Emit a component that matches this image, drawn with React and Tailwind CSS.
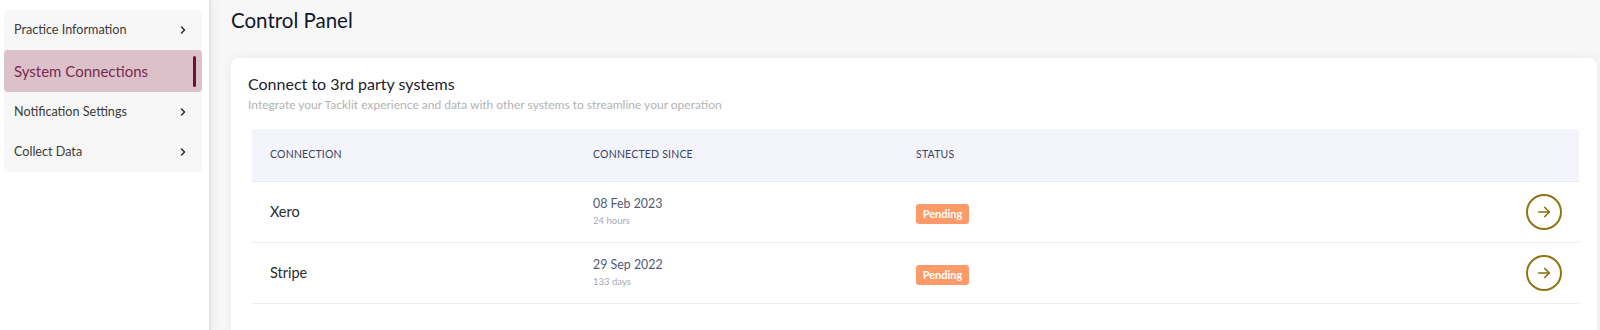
import React from "react";

const menu = [
  { label: "Practice Information" },
  { label: "System Connections", active: true },
  { label: "Notification Settings" },
  { label: "Collect Data" },
];

const connections = [
  { name: "Xero", date: "08 Feb 2023", ago: "24 hours", status: "Pending" },
  { name: "Stripe", date: "29 Sep 2022", ago: "133 days", status: "Pending" },
];

function Chevron() {
  return (
    <svg width="12" height="12" viewBox="0 0 24 24" fill="none" stroke="#2b2b2b" strokeWidth="3" strokeLinecap="round" strokeLinejoin="round">
      <path d="M9 6l6 6-6 6" />
    </svg>
  );
}

function ArrowButton() {
  return (
    <button className="w-[36px] h-[36px] rounded-full border-2 border-[#8f7516] flex items-center justify-center">
      <svg width="18" height="18" viewBox="0 0 24 24" fill="none" stroke="#8a6f10" strokeWidth="2.2" strokeLinecap="round" strokeLinejoin="round">
        <path d="M5 12h14" />
        <path d="M13 6l6 6-6 6" />
      </svg>
    </button>
  );
}

export default function App() {
  return (
    <div className="flex h-[330px] bg-[#f7f7f7] font-['Lato','Open_Sans',sans-serif] overflow-hidden">
      {/* --- Sidebar --- */}
      <aside className="w-[211px] shrink-0 bg-white border-r-[2px] border-[#e2e2e2] shadow-[2px_0_10px_rgba(0,0,0,0.05)] pt-[10px] pl-[4px] pr-[7px]">
        <div className="bg-[#f7f7f7] rounded-[4px] w-[198px]">
          {menu.map((item) =>
            item.active ? (
              <div
                key={item.label}
                className="h-[42px] flex items-center justify-between pl-[10px] pr-[6px] bg-[#dcc1cb] rounded-[4px]"
              >
                <span className="text-[15px] text-[#7a2a4c]">{item.label}</span>
                <span className="w-[3px] h-[31px] bg-[#6b1234] rounded-full"></span>
              </div>
            ) : (
              <div key={item.label} className="h-[40px] flex items-center justify-between pl-[10px] pr-[13px]">
                <span className="text-[12.6px] text-[#3a3a3a]">{item.label}</span>
                <Chevron />
              </div>
            )
          )}
        </div>
      </aside>

      {/* --- Main --- */}
      <main className="flex-1 pl-[20px] pr-[3px]">
        <h1 className="text-[20.5px] text-[#101828] h-[40px] flex items-center pt-[1px]">Control Panel</h1>

        <div className="mt-[18px] bg-white rounded-[8px] shadow-[0_0_12px_rgba(0,0,0,0.06)] pt-[16px] pl-[17px] pr-[18px] pb-[40px]">
          <h2 className="text-[16px] text-[#1d1d2b] leading-[20px]">Connect to 3rd party systems</h2>
          <p className="text-[12px] text-[#b3b3b3] leading-[16px] mt-[3px]">
            Integrate your Tacklit experience and data with other systems to streamline your operation
          </p>

          <div className="mt-[16px] ml-[4px]">
            <div className="grid grid-cols-[323px_323px_323px_1fr] h-[53px] items-center bg-[#f4f5fc] border-b border-[#e6e8f2] text-[10.5px] text-[#3b4360] tracking-[0.2px]">
              <div className="pl-[18px]">CONNECTION</div>
              <div className="pl-[18px]">CONNECTED SINCE</div>
              <div className="pl-[18px]">STATUS</div>
              <div></div>
            </div>
            {connections.map((c) => (
              <div
                key={c.name}
                className="grid grid-cols-[323px_323px_323px_1fr] h-[61px] items-center border-b border-[#ececec]"
              >
                <div className="pl-[18px] text-[14.5px] text-[#2b2b2b]">{c.name}</div>
                <div className="pl-[18px] flex flex-col">
                  <span className="text-[12.4px] text-[#525a78] leading-[16px]">{c.date}</span>
                  <span className="text-[9.5px] text-[#a8a9b8] leading-[14px] mt-[2px]">{c.ago}</span>
                </div>
                <div className="pl-[18px]">
                  <span className="inline-flex items-center justify-center w-[53px] h-[20px] rounded-[3px] bg-[#fd9a6a] text-white text-[11px] font-bold">
                    {c.status}
                  </span>
                </div>
                <div className="flex justify-end pr-[17px]">
                  <ArrowButton />
                </div>
              </div>
            ))}
          </div>
        </div>
      </main>
    </div>
  );
}
